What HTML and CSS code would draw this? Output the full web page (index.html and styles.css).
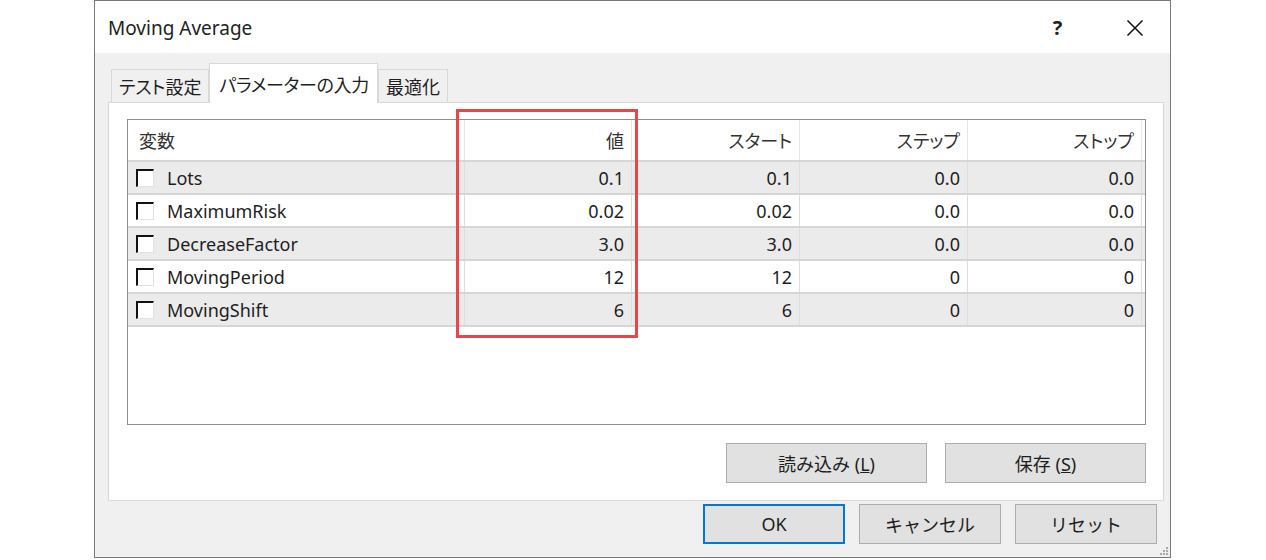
FILE: index.html
```html
<!DOCTYPE html>
<html lang="ja">
<head>
  <meta charset="UTF-8"/>
  <title>Moving Average</title>
  <link rel="stylesheet" href="styles.css">
</head>
<body>
<div class="window">
  <div class="titlebar">
    <span class="title">Moving Average</span>
    <div class="caption-btns">
      <span class="help">?</span>
      <span class="close">
        <svg width="18" height="18" viewBox="0 0 18 18"><path d="M1.5 1.5 L16.5 16.5 M16.5 1.5 L1.5 16.5" stroke="#111" stroke-width="1.5" fill="none"/></svg>
      </span>
    </div>
  </div>

  <div class="content">
    <div class="tabs">
      <div class="tab">テスト設定</div>
      <div class="tab active">パラメーターの入力</div>
      <div class="tab">最適化</div>
    </div>

    <div class="panel">
      <div class="list">
        <div class="row head">
          <div class="cell name">変数</div>
          <div class="cell">値</div>
          <div class="cell">スタート</div>
          <div class="cell">ステップ</div>
          <div class="cell">ストップ</div>
        </div>
        <div class="row">
          <div class="cell name"><span class="check"></span>Lots</div>
          <div class="cell">0.1</div><div class="cell">0.1</div><div class="cell">0.0</div><div class="cell">0.0</div>
        </div>
        <div class="row">
          <div class="cell name"><span class="check"></span>MaximumRisk</div>
          <div class="cell">0.02</div><div class="cell">0.02</div><div class="cell">0.0</div><div class="cell">0.0</div>
        </div>
        <div class="row">
          <div class="cell name"><span class="check"></span>DecreaseFactor</div>
          <div class="cell">3.0</div><div class="cell">3.0</div><div class="cell">0.0</div><div class="cell">0.0</div>
        </div>
        <div class="row">
          <div class="cell name"><span class="check"></span>MovingPeriod</div>
          <div class="cell">12</div><div class="cell">12</div><div class="cell">0</div><div class="cell">0</div>
        </div>
        <div class="row">
          <div class="cell name"><span class="check"></span>MovingShift</div>
          <div class="cell">6</div><div class="cell">6</div><div class="cell">0</div><div class="cell">0</div>
        </div>
        <!-- red marker around the 値 column -->
        <div class="highlight"></div>
      </div>

      <div class="file-btns">
        <button class="btn wide">読み込み (<u>L</u>)</button>
        <button class="btn wide">保存 (<u>S</u>)</button>
      </div>
    </div>

    <div class="dialog-btns">
      <button class="btn default">OK</button>
      <button class="btn">キャンセル</button>
      <button class="btn">リセット</button>
    </div>
  </div>

  <div class="grip">
    <svg width="10" height="10" viewBox="0 0 10 10" fill="#a8a8a8">
      <rect x="7" y="1" width="2" height="2"/>
      <rect x="4" y="4" width="2" height="2"/><rect x="7" y="4" width="2" height="2"/>
      <rect x="1" y="7" width="2" height="2"/><rect x="4" y="7" width="2" height="2"/><rect x="7" y="7" width="2" height="2"/>
    </svg>
  </div>
</div>
</body>
</html>
```

FILE: styles.css
```css
body {
  margin: 0;
  background: #fff;
  font-family: "Noto Sans", "Noto Sans CJK JP", sans-serif;
  font-feature-settings: "palt";
  color: #1e1e1e;
}

.window {
  position: relative;
  width: 1075px;
  height: 556px;
  margin-left: 94px;
  border: 1px solid #7a7a7a;
  background: #f0f0f0;
  display: flex;
  flex-direction: column;
}

.titlebar {
  flex-shrink: 0;
  height: 52px;
  background: #fff;
  display: flex;
  align-items: center;
  justify-content: space-between;
  padding-left: 13px;
}

.title {
  font-size: 19px;
  color: #222;
  margin-top: 2px;
}

.caption-btns {
  display: flex;
  align-items: center;
  height: 100%;
}

.caption-btns span {
  display: flex;
  align-items: center;
  justify-content: center;
}

.help {
  width: 75px;
  margin-right: 5px;
  font-size: 20px;
  font-weight: bold;
  color: #222;
}

.close {
  width: 70px;
  margin-top: 2px;
}

.content {
  flex: 1;
  padding: 11px 6px 0 13px;
  display: flex;
  flex-direction: column;
}

.tabs {
  display: flex;
  align-items: flex-end;
  height: 38px;
  padding-left: 3px;
}

.tab {
  height: 32px;
  padding: 0 7px;
  display: flex;
  align-items: center;
  font-size: 18px;
  background: #f0f0f0;
  border: 1px solid #d9d9d9;
  border-bottom: none;
}

.tab.active {
  height: 39px;
  background: #fff;
  margin-bottom: -1px;
  position: relative;
  z-index: 1;
  padding: 0 8px 0 9px;
  letter-spacing: -0.3px;
}

.panel {
  height: 381px;
  background: #fff;
  border: 1px solid #d9d9d9;
  padding: 16px 17px 0 18px;
}

.list {
  position: relative;
  height: 304px;
  border: 1px solid #8f8f8f;
}

.row {
  display: grid;
  grid-template-columns: 337px 167px 168px 168px 174px;
  height: 31px;
  border-bottom: 2px solid #d6d6d6;
  font-size: 18px;
}

.row:nth-child(even) {
  background: #ebebeb;
}

.row.head {
  height: 40px;
  background: #fff;
  color: #333;
}

.cell {
  display: flex;
  align-items: center;
  justify-content: flex-end;
  padding-right: 7px;
  border-right: 1px solid #dedede;
}

.head .cell {
  border-right-color: #e6e6e6;
}

.cell.name {
  justify-content: flex-start;
  padding-left: 8px;
}

.head .cell.name {
  padding-left: 11px;
}

.check {
  width: 15px;
  height: 15px;
  margin-right: 13px;
  background: #fff;
  border-top: 2px solid #111;
  border-left: 2px solid #111;
  border-right: 1px solid #e2e2e2;
  border-bottom: 1px solid #e2e2e2;
}

.highlight {
  position: absolute;
  left: 328px;
  top: -11px;
  width: 176px;
  height: 223px;
  border: 3px solid #e8474a;
}

.file-btns {
  display: flex;
  justify-content: flex-end;
  gap: 18px;
  margin-top: 18px;
}

.btn {
  width: 142px;
  height: 40px;
  background: #e1e1e1;
  border: 1px solid #adadad;
  font-family: inherit;
  font-size: 18px;
  color: #1e1e1e;
  padding: 0;
}

.btn.wide {
  width: 201px;
}

.btn.default {
  border: 2px solid #0078d7;
}

.dialog-btns {
  display: flex;
  justify-content: flex-end;
  gap: 14px;
  margin-top: 3px;
  margin-right: 7px;
}

.grip {
  position: absolute;
  right: 1px;
  bottom: 1px;
  line-height: 0;
}
```
